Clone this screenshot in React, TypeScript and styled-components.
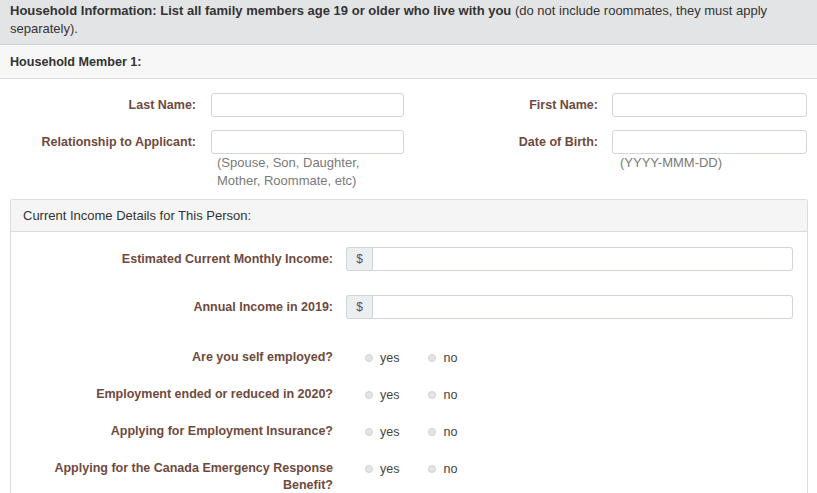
import React, { FC } from 'react';
import styled, { createGlobalStyle } from 'styled-components';

const GlobalStyle = createGlobalStyle`
  html, body {
    margin: 0;
    padding: 0;
    background: #ffffff;
  }
  body {
    font-family: 'Liberation Sans', Arial, sans-serif;
    font-size: 13px;
    color: #333333;
  }
`;

const Page = styled.div`
  width: 817px;
  height: 493px;
  overflow: hidden;
  background: #ffffff;
`;

const InfoHeader = styled.p`
  margin: 0;
  background-color: #e3e4e6;
  border-bottom: 1px solid #d3d4d6;
  padding: 2px 10px 6px;
  line-height: 18px;
  font-size: 13px;
  color: #333333;

  strong {
    font-weight: bold;
  }
`;

const MemberBar = styled.div`
  background-color: #f7f7f7;
  border-bottom: 1px solid #dcdcdc;
  height: 34px;
  box-sizing: border-box;
  padding: 0 10px;
  display: flex;
  align-items: center;
  font-weight: bold;
  font-size: 12.6px;
  color: #333333;
`;

const FieldRow = styled.div<{ $top: number }>`
  display: grid;
  grid-template-columns: 211px 193px 208px 195px;
  align-items: start;
  margin-top: ${(p) => p.$top}px;
`;

const FieldLabel = styled.label<{ $pad: number }>`
  display: flex;
  align-items: center;
  justify-content: flex-end;
  height: 24px;
  padding-right: ${(p) => p.$pad}px;
  font-weight: bold;
  font-size: 12.5px;
  color: #6e4a3e;
  white-space: nowrap;
`;

const FieldCell = styled.div`
  display: flex;
  flex-direction: column;
`;

const TextBox = styled.input`
  box-sizing: border-box;
  width: 100%;
  height: 24px;
  border: 1px solid #d0d5dc;
  border-radius: 3px;
  background: #ffffff;
  font: inherit;
  padding: 0 6px;
  outline: none;
`;

const Help = styled.div<{ $indent: number }>`
  padding-left: ${(p) => p.$indent}px;
  color: #7a7a7a;
  line-height: 18px;
  font-size: 13px;
`;

const Panel = styled.div`
  margin: 9px 9px 0 10px;
  border: 1px solid #dcdcdc;
  border-bottom: none;
  border-radius: 3px 3px 0 0;
`;

const PanelHeading = styled.div`
  background-color: #f5f5f5;
  border-bottom: 1px solid #dcdcdc;
  height: 31px;
  display: flex;
  align-items: center;
  padding: 0 12px;
  color: #333333;
`;

const PanelBody = styled.div`
  padding: 15px 14px 0 0;
`;

const Row = styled.div<{ $space: number }>`
  display: grid;
  grid-template-columns: 335px 1fr;
  margin-bottom: ${(p) => p.$space}px;
`;

const RowLabel = styled.div<{ $tall?: boolean }>`
  text-align: right;
  padding-right: 13px;
  padding-left: 40px;
  font-weight: bold;
  font-size: 12.5px;
  color: #6e4a3e;
  line-height: ${(p) => (p.$tall ? '24px' : '17px')};
`;

const InputGroup = styled.div`
  display: flex;
  height: 24px;
`;

const Addon = styled.span`
  box-sizing: border-box;
  width: 26px;
  display: flex;
  align-items: center;
  justify-content: center;
  background-color: #eceef0;
  border: 1px solid #d0d5dc;
  border-right: none;
  border-radius: 3px 0 0 3px;
  font-size: 12px;
  color: #555555;
`;

const GroupBox = styled(TextBox)`
  flex: 1;
  border-radius: 0 3px 3px 0;
`;

const Options = styled.div`
  display: flex;
  align-items: center;
  height: 17px;
  padding-left: 19px;
  gap: 29px;
`;

const Option = styled.label`
  display: flex;
  align-items: center;
  gap: 7px;
  font-size: 12.5px;
  color: #444444;
`;

const Dot = styled.span`
  box-sizing: border-box;
  width: 8px;
  height: 8px;
  border-radius: 50%;
  background: #e4e4e4;
  border: 1px solid #d2d2d2;
`;

const QuestionList = styled.div`
  padding-top: 2px;
`;

const questions = [
  'Are you self employed?',
  'Employment ended or reduced in 2020?',
  'Applying for Employment Insurance?',
  'Applying for the Canada Emergency Response Benefit?',
];

const YesNo: FC = () => (
  <Options>
    <Option>
      <Dot />
      yes
    </Option>
    <Option>
      <Dot />
      no
    </Option>
  </Options>
);

export default function App() {
  return (
    <Page>
      <GlobalStyle />
      <InfoHeader>
        <strong>
          Household Information: List all family members age 19 or older who live with you
        </strong>{' '}
        (do not include roommates, they must apply separately).
      </InfoHeader>
      <MemberBar>Household Member 1:</MemberBar>

      <FieldRow $top={14}>
        <FieldLabel $pad={15}>Last Name:</FieldLabel>
        <FieldCell>
          <TextBox />
        </FieldCell>
        <FieldLabel $pad={14}>First Name:</FieldLabel>
        <FieldCell>
          <TextBox />
        </FieldCell>
      </FieldRow>

      <FieldRow $top={13}>
        <FieldLabel $pad={15}>Relationship to Applicant:</FieldLabel>
        <FieldCell>
          <TextBox />
          <Help $indent={6}>
            (Spouse, Son, Daughter,
            <br />
            Mother, Roommate, etc)
          </Help>
        </FieldCell>
        <FieldLabel $pad={14}>Date of Birth:</FieldLabel>
        <FieldCell>
          <TextBox />
          <Help $indent={8}>(YYYY-MMM-DD)</Help>
        </FieldCell>
      </FieldRow>

      <Panel>
        <PanelHeading>Current Income Details for This Person:</PanelHeading>
        <PanelBody>
          <Row $space={24}>
            <RowLabel $tall>Estimated Current Monthly Income:</RowLabel>
            <InputGroup>
              <Addon>$</Addon>
              <GroupBox />
            </InputGroup>
          </Row>
          <Row $space={28}>
            <RowLabel $tall>Annual Income in 2019:</RowLabel>
            <InputGroup>
              <Addon>$</Addon>
              <GroupBox />
            </InputGroup>
          </Row>
          <QuestionList>
            {questions.map((q) => (
              <Row key={q} $space={20}>
                <RowLabel>{q}</RowLabel>
                <YesNo />
              </Row>
            ))}
          </QuestionList>
        </PanelBody>
      </Panel>
    </Page>
  );
}
